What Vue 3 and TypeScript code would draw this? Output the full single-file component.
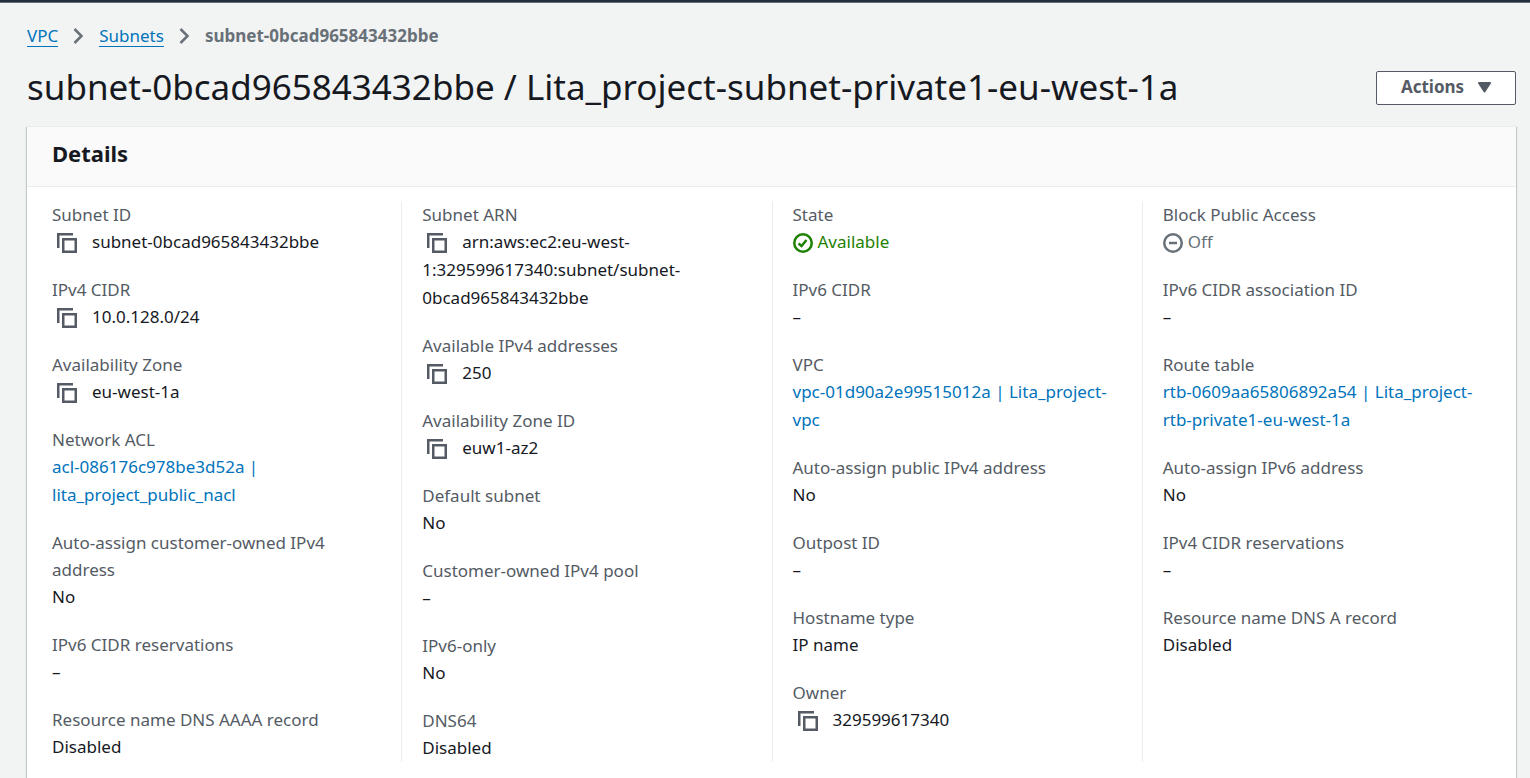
<script setup lang="ts">
interface Field {
  label: string
  parts: string[]
  kind?: 'copy' | 'link' | 'ok' | 'off'
}

const columns: Field[][] = [
  [
    { label: 'Subnet ID', parts: ['subnet-0bcad965843432bbe'], kind: 'copy' },
    { label: 'IPv4 CIDR', parts: ['10.0.128.0/24'], kind: 'copy' },
    { label: 'Availability Zone', parts: ['eu-west-1a'], kind: 'copy' },
    { label: 'Network ACL', parts: ['acl-086176c978be3d52a | ', 'lita_project_public_nacl'], kind: 'link' },
    { label: 'Auto-assign customer-owned IPv4 address', parts: ['No'] },
    { label: 'IPv6 CIDR reservations', parts: ['–'] },
    { label: 'Resource name DNS AAAA record', parts: ['Disabled'] },
  ],
  [
    { label: 'Subnet ARN', parts: ['arn:aws:ec2:eu-west-', '1:329599617340:subnet/subnet-', '0bcad965843432bbe'], kind: 'copy' },
    { label: 'Available IPv4 addresses', parts: ['250'], kind: 'copy' },
    { label: 'Availability Zone ID', parts: ['euw1-az2'], kind: 'copy' },
    { label: 'Default subnet', parts: ['No'] },
    { label: 'Customer-owned IPv4 pool', parts: ['–'] },
    { label: 'IPv6-only', parts: ['No'] },
    { label: 'DNS64', parts: ['Disabled'] },
  ],
  [
    { label: 'State', parts: ['Available'], kind: 'ok' },
    { label: 'IPv6 CIDR', parts: ['–'] },
    { label: 'VPC', parts: ['vpc-01d90a2e99515012a | Lita_project-', 'vpc'], kind: 'link' },
    { label: 'Auto-assign public IPv4 address', parts: ['No'] },
    { label: 'Outpost ID', parts: ['–'] },
    { label: 'Hostname type', parts: ['IP name'] },
    { label: 'Owner', parts: ['329599617340'], kind: 'copy' },
  ],
  [
    { label: 'Block Public Access', parts: ['Off'], kind: 'off' },
    { label: 'IPv6 CIDR association ID', parts: ['–'] },
    { label: 'Route table', parts: ['rtb-0609aa65806892a54 | Lita_project-', 'rtb-private1-eu-west-1a'], kind: 'link' },
    { label: 'Auto-assign IPv6 address', parts: ['No'] },
    { label: 'IPv4 CIDR reservations', parts: ['–'] },
    { label: 'Resource name DNS A record', parts: ['Disabled'] },
  ],
]

function copy(field: Field) {
  navigator.clipboard?.writeText(field.parts.join(''))
}
</script>

<template>
  <div class="page">
    <div class="topbar"></div>
    <nav class="crumbs" aria-label="Breadcrumbs">
      <a href="#vpc">VPC</a>
      <svg class="chevron" width="11" height="16" viewBox="0 0 11 16"><path d="M1.500 1l7 7-7 7" /></svg>
      <a href="#subnets">Subnets</a>
      <svg class="chevron" width="11" height="16" viewBox="0 0 11 16"><path d="M1.500 1l7 7-7 7" /></svg>
      <span class="current">subnet-0bcad965843432bbe</span>
    </nav>
    <header class="heading">
      <h1>subnet-0bcad965843432bbe / Lita_project-subnet-private1-eu-west-1a</h1>
      <button type="button" class="actions">
        Actions
        <svg width="13" height="11" viewBox="0 0 13 11"><path d="M1 1h11L6.500 9.500z" /></svg>
      </button>
    </header>
    <section class="card">
      <div class="card-head"><h2>Details</h2></div>
      <div class="card-body">
        <dl v-for="(column, i) in columns" :key="i" class="column">
          <div v-for="field in column" :key="field.label">
            <dt>{{ field.label }}</dt>
            <dd :class="field.kind">
              <button v-if="field.kind === 'copy'" type="button" class="copy-button" :aria-label="'Copy ' + field.label" @click="copy(field)">
                <svg width="20" height="20" viewBox="0 0 20 20"><path d="M1.250 15V1.250H16M6.250 6.250h12.500v12.500h-12.500z" /></svg>
              </button>
              <svg v-else-if="field.kind === 'ok'" class="status" width="20" height="20" viewBox="0 0 20 20">
                <circle cx="10" cy="10" r="8.750" /><path d="M5.500 10.500l3 2.500 5-6" />
              </svg>
              <svg v-else-if="field.kind === 'off'" class="status" width="20" height="20" viewBox="0 0 20 20">
                <circle cx="10" cy="10" r="8.750" /><path d="M6 10h8" />
              </svg>
              <a v-if="field.kind === 'link'" href="#resource"><template v-for="part in field.parts" :key="part">{{ part }}<wbr /></template></a>
              <template v-else><template v-for="part in field.parts" :key="part">{{ part }}<wbr /></template></template>
            </dd>
          </div>
        </dl>
      </div>
    </section>
  </div>
</template>

<style>
body {
  margin: 0;
  background: #f2f3f3;
}
</style>

<style scoped>
.page {
  display: flex;
  flex-direction: column;
  min-height: 100vh;
  box-sizing: border-box;
  background: #f2f3f3;
  color: #16191f;
  font: 17px/28px "Noto Sans", "Open Sans", sans-serif;
}
.topbar {
  height: 2px;
  background: #232f3e;
  border-bottom: 1px solid #687078;
}
.crumbs {
  display: flex;
  align-items: center;
  gap: 15px;
  padding: 19px 14px 0 27px;
  color: #687078;
}
.crumbs a {
  color: #0073bb;
  line-height: 21px;
  text-decoration: none;
  border-bottom: 1px solid #0073bb;
}
.chevron {
  fill: none;
  stroke: #687078;
  stroke-width: 2.5;
}
.current {
  font-weight: 700;
}
.heading {
  display: flex;
  align-items: center;
  justify-content: space-between;
  padding: 15px 14px 17px 27px;
}
h1 {
  margin: 0;
  font-size: 35px;
  line-height: 44px;
  font-weight: 400;
}
.actions {
  display: flex;
  align-items: center;
  justify-content: center;
  gap: 14px;
  width: 140px;
  height: 34px;
  margin-top: 2px;
  padding: 0 0 2px;
  border: 1px solid #545b64;
  border-radius: 2px;
  background: #fff;
  color: #545b64;
  font: inherit;
  font-weight: 700;
}
.actions svg {
  fill: #545b64;
  stroke: #545b64;
  stroke-width: 2;
  stroke-linejoin: round;
}
.card {
  flex: 1;
  margin: 0 14px 0 27px;
  background: #fff;
  border-top: 1px solid #eaeded;
  box-shadow: 0 1px 1px rgba(0, 28, 36, 0.3), 1px 1px 1px rgba(0, 28, 36, 0.15), -1px 1px 1px rgba(0, 28, 36, 0.15);
}
.card-head {
  padding: 12px 25px 19px;
  background: #fafafa;
  border-bottom: 1px solid #eaeded;
}
h2 {
  margin: 0;
  font-size: 22px;
  line-height: 28px;
  font-weight: 700;
}
.card-body {
  display: grid;
  grid-template-columns: repeat(4, 1fr);
  padding: 14px 3px 15px 5px;
}
.column {
  display: flex;
  flex-direction: column;
  gap: 20px;
  margin: 0;
  padding: 0 20px;
  border-right: 1px solid #eaeded;
}
.column:last-child {
  border-right-color: transparent;
}
dt {
  line-height: 27px;
  color: #545b64;
}
dd {
  margin: 0;
}
dd a {
  color: #0073bb;
  text-decoration: none;
}
.copy-button {
  display: inline-block;
  height: 20px;
  margin: 0 10px 0 0;
  padding: 0 5px;
  border: 0;
  background: none;
  vertical-align: -5px;
}
.copy-button svg {
  display: block;
  fill: none;
  stroke: #545b64;
  stroke-width: 2.5;
}
.status {
  margin-right: 5px;
  fill: none;
  stroke: currentColor;
  stroke-width: 2.5;
  vertical-align: -5px;
}
.ok {
  color: #1d8102;
}
.off {
  color: #687078;
}
</style>
